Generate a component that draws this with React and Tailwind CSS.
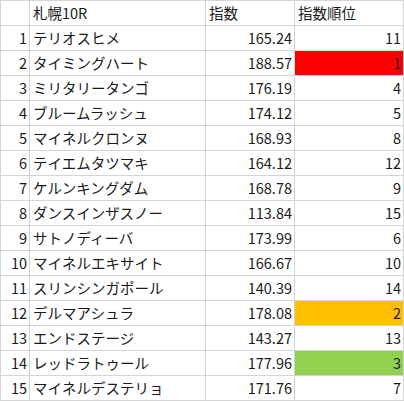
import React from "react";

const rows = [
  [1, "テリオスヒメ", "165.24", "11", ""],
  [2, "タイミングハート", "188.57", "1", "bg-[#ff0000]"],
  [3, "ミリタリータンゴ", "176.19", "4", ""],
  [4, "ブルームラッシュ", "174.12", "5", ""],
  [5, "マイネルクロンヌ", "168.93", "8", ""],
  [6, "テイエムタツマキ", "164.12", "12", ""],
  [7, "ケルンキングダム", "168.78", "9", ""],
  [8, "ダンスインザスノー", "113.84", "15", ""],
  [9, "サトノディーバ", "173.99", "6", ""],
  [10, "マイネルエキサイト", "166.67", "10", ""],
  [11, "スリンシンガポール", "140.39", "14", ""],
  [12, "デルマアシュラ", "178.08", "2", "bg-[#ffc000]"],
  [13, "エンドステージ", "143.27", "13", ""],
  [14, "レッドラトゥール", "177.96", "3", "bg-[#92d050]"],
  [15, "マイネルデステリョ", "171.76", "7", ""],
];

export default function App() {
  const cell = "h-[24px] flex items-center bg-white";
  return (
    <div
      className="w-[404px] h-[401px] bg-[#d4d4d4] p-px grid grid-cols-[28px_175px_88px_108px] gap-px text-[14.5px] leading-none text-[#1a1a1a]"
      style={{ fontFamily: '"Noto Sans CJK JP", "Noto Sans", sans-serif' }}
    >
      <div className={cell}></div>
      <div className={`${cell} pl-[3px]`}>札幌10R</div>
      <div className={`${cell} pl-[3px]`}>指数</div>
      <div className={`${cell} pl-[3px]`}>指数順位</div>
      {rows.map(([n, name, idx, rank, bg]) => (
        <React.Fragment key={n}>
          <div className={`${cell} justify-end pr-[2px]`}>{n}</div>
          <div className={`${cell} pl-[3px]`}>{name}</div>
          <div className={`${cell} justify-end pr-[2px]`}>{idx}</div>
          <div className={`h-[24px] flex items-center justify-end pr-[2px] ${bg || "bg-white"}`}>{rank}</div>
        </React.Fragment>
      ))}
    </div>
  );
}
